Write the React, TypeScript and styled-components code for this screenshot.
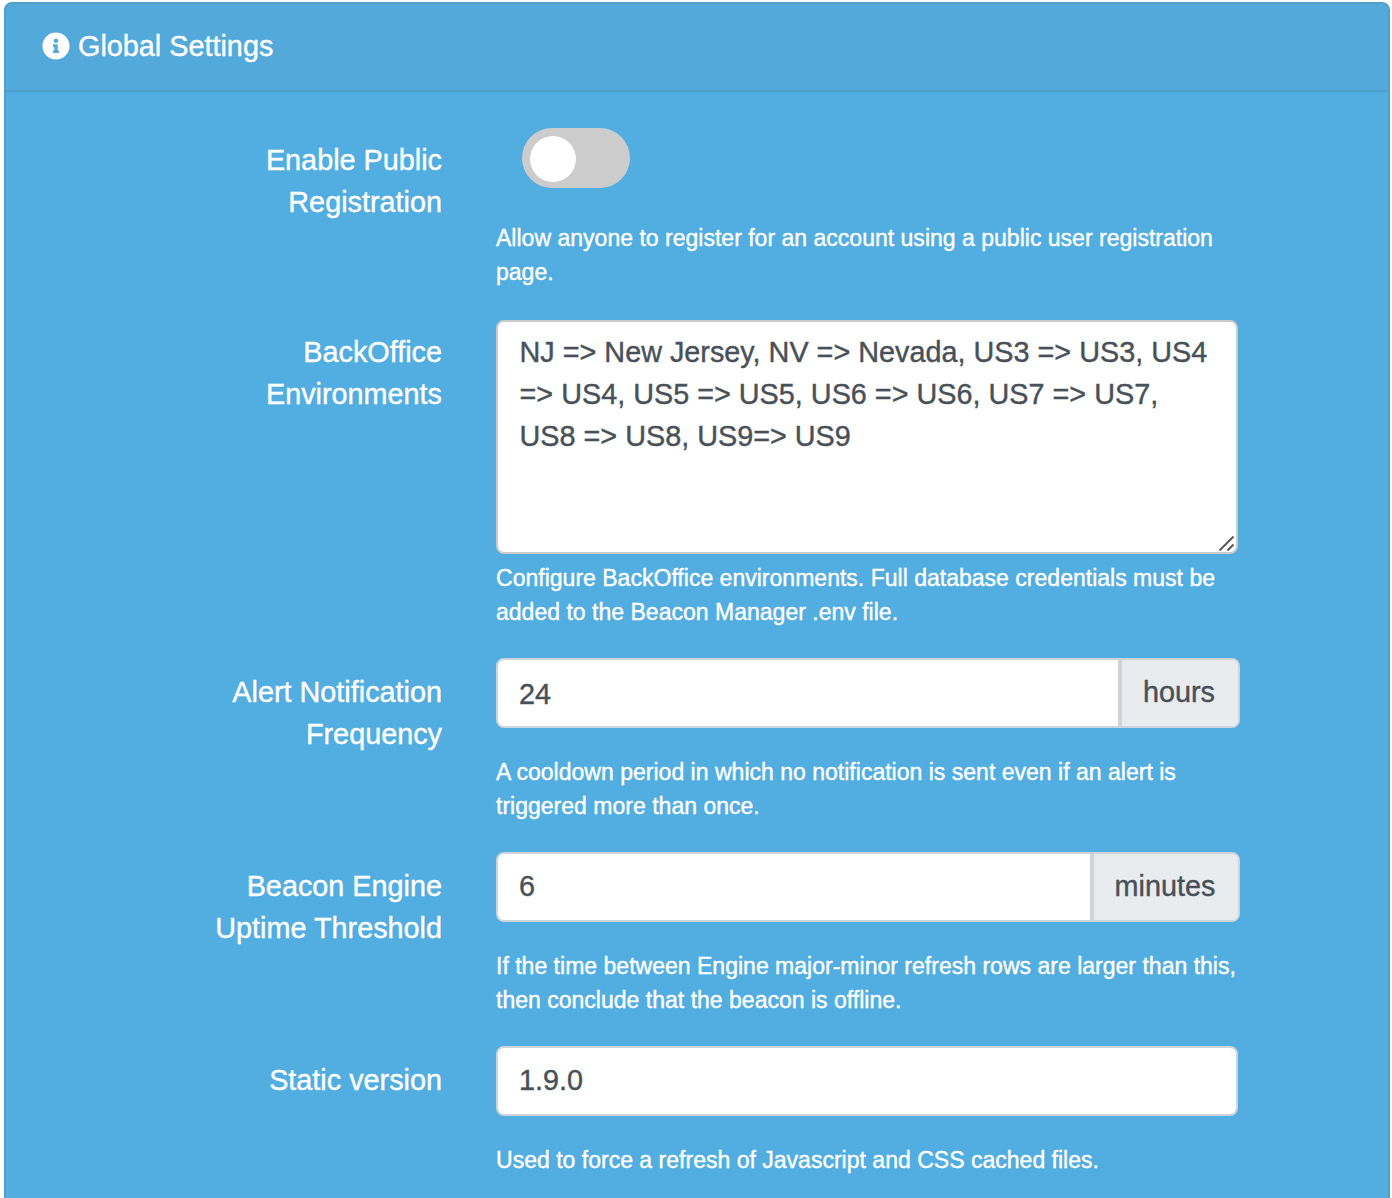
import React from "react";
import styled, { createGlobalStyle } from "styled-components";
import { FaInfoCircle } from "react-icons/fa";

const GlobalStyle = createGlobalStyle`
  * { box-sizing: border-box; }
  html { overflow: hidden; }
  body {
    margin: 0;
    background: #fff;
    font-family: "Liberation Sans", Arial, sans-serif;
    font-size: 28.8px;
    line-height: 42px;
    color: #fff;
    -webkit-text-stroke: 0.4px currentColor;
  }
`;

const Page = styled.main`
  height: 1198px;
  padding: 2px 2px 0 4px;
  overflow: hidden;
`;

const Card = styled.section`
  height: 1220px;
  background: #52ade0;
  border: 2px solid #4f9fcb;
  border-radius: 8px;
  overflow: hidden;
`;

const CardHeader = styled.header`
  display: flex;
  align-items: center;
  gap: 8px;
  height: 88px;
  padding: 0 36px 2px;
  background: #53a9da;
  border-bottom: 2px solid #4f9fcb;
`;

const Form = styled.div`
  padding-top: 36px;
`;

const Row = styled.div<{ $height: number }>`
  display: grid;
  grid-template-columns: 436px 744px;
  column-gap: 54px;
  height: ${(p) => p.$height}px;
`;

const Label = styled.div<{ $top: number }>`
  display: flex;
  flex-direction: column;
  align-items: flex-end;
  padding-top: ${(p) => p.$top}px;
`;

const Line = styled.span`
  display: block;
  width: max-content;
  white-space: pre;
`;

const Help = styled.div<{ $gap: number }>`
  margin-top: ${(p) => p.$gap}px;
  font-size: 23.04px;
  line-height: 34px;
`;

const Toggle = styled.button`
  display: block;
  width: 108px;
  height: 60px;
  margin-left: 26px;
  padding: 8px;
  border: 0;
  border-radius: 30px;
  background: #ccc;
`;

const Knob = styled.span`
  display: block;
  width: 46px;
  height: 46px;
  border-radius: 50%;
  background: #fff;
`;

const TextArea = styled.div`
  display: flex;
  justify-content: space-between;
  width: 742px;
  height: 234px;
  padding: 9px 0 0 21.5px;
  background: #fff;
  border: 2px solid #ccc;
  border-radius: 8px;
  color: #495057;
`;

const Grip = styled.svg`
  flex: none;
  align-self: flex-end;
  width: 20px;
  height: 20px;
  margin-left: -20px;
`;

const Group = styled.div<{ $wide?: boolean }>`
  display: flex;
  width: ${(p) => (p.$wide ? 744 : 742)}px;
  height: 70px;
  border: 2px solid #ced4da;
  border-radius: 8px;
  background: #fff;
  color: #495057;
  overflow: hidden;
`;

const Value = styled.div<{ $top: number }>`
  flex: 1;
  padding: ${(p) => p.$top}px 21px 0;
`;

const Unit = styled.div<{ $width: number }>`
  display: flex;
  justify-content: center;
  width: ${(p) => p.$width}px;
  padding: 11px 2px 0 0;
  background: #e9ecef;
  border-left: 4px solid #ced4da;
`;

const Lines = ({ items }: { items: string[] }) => (
  <>
    {items.map((text) => (
      <Line key={text}>{text}</Line>
    ))}
  </>
);

interface FieldProps {
  label: string[];
  labelTop?: number;
  help: string[];
  helpGap?: number;
  height?: number;
  children: React.ReactNode;
}

const Field = ({ label, labelTop = 13, help, helpGap = 27, height = 194, children }: FieldProps) => (
  <Row $height={height}>
    <Label $top={labelTop}><Lines items={label} /></Label>
    <div>
      {children}
      <Help $gap={helpGap}><Lines items={help} /></Help>
    </div>
  </Row>
);

export default function App() {
  return (
    <>
      <GlobalStyle />
      <Page>
        <Card>
          <CardHeader>
            <FaInfoCircle size={28} strokeWidth={0} />
            <Line>Global Settings</Line>
          </CardHeader>
          <Form>
            <Field
              height={192}
              label={["Enable Public", "Registration"]}
              labelTop={11}
              helpGap={33}
              help={["Allow anyone to register for an account using a public user registration", "page."]}
            >
              <Toggle aria-label="Enable Public Registration"><Knob /></Toggle>
            </Field>
            <Field
              height={338}
              label={["BackOffice", "Environments"]}
              labelTop={11}
              helpGap={7}
              help={["Configure BackOffice environments. Full database credentials must be", "added to the Beacon Manager .env file."]}
            >
              <TextArea>
                <div>
                  <Lines
                    items={[
                      "NJ => New Jersey, NV => Nevada, US3 => US3, US4",
                      "=> US4, US5 => US5, US6 => US6, US7 => US7,",
                      "US8 => US8, US9=> US9",
                    ]}
                  />
                </div>
                <Grip viewBox="0 0 20 20">
                  <path d="M3.5 18.5 17.5 4.5M11.5 18.5l6-6" stroke="#555" strokeWidth="1.8" />
                </Grip>
              </TextArea>
            </Field>
            <Field
              label={["Alert Notification", "Frequency"]}
              help={["A cooldown period in which no notification is sent even if an alert is", "triggered more than once."]}
            >
              <Group $wide>
                <Value $top={13}>24</Value>
                <Unit $width={120}>hours</Unit>
              </Group>
            </Field>
            <Field
              label={["Beacon Engine", "Uptime Threshold"]}
              help={["If the time between Engine major-minor refresh rows are larger than this,", "then conclude that the beacon is offline."]}
            >
              <Group $wide>
                <Value $top={11}>6</Value>
                <Unit $width={148}>minutes</Unit>
              </Group>
            </Field>
            <Field
              label={["Static version"]}
              help={["Used to force a refresh of Javascript and CSS cached files."]}
            >
              <Group>
                <Value $top={11}>1.9.0</Value>
              </Group>
            </Field>
          </Form>
        </Card>
      </Page>
    </>
  );
}
